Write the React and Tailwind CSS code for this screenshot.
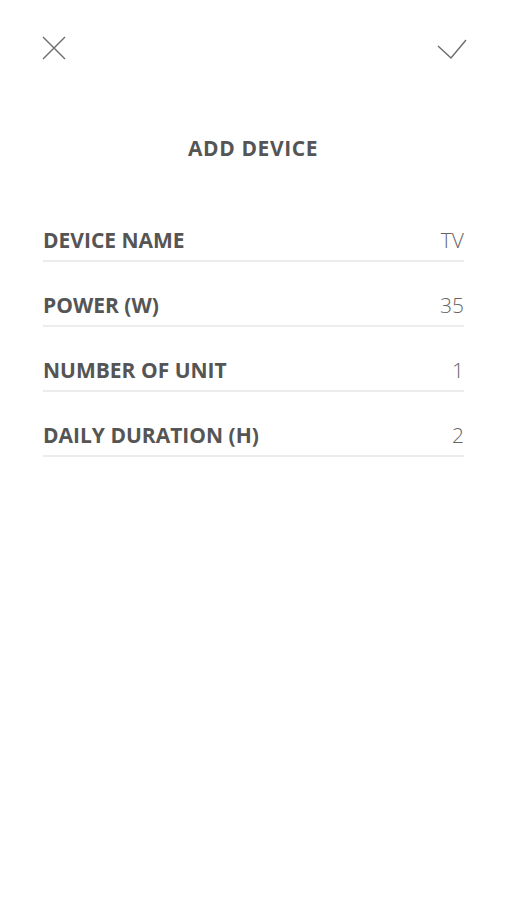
export default function App() {
  const rows = [
    ["DEVICE NAME", "TV"],
    ["POWER (W)", "35"],
    ["NUMBER OF UNIT", "1"],
    ["DAILY DURATION (H)", "2"],
  ];
  return (
    <div className="min-h-[900px] w-full bg-white" style={{ fontFamily: '"Open Sans", sans-serif' }}>
      <div className="flex justify-between pt-[36px] pl-[41px] pr-[39px]">
        <svg width="26" height="24" viewBox="0 0 26 24" fill="none" stroke="#6b6b6b" strokeWidth="1.4">
          <path d="M2 1 L24 23 M24 1 L2 23" />
        </svg>
        <svg width="30" height="24" viewBox="0 0 30 24" fill="none" stroke="#6b6b6b" strokeWidth="1.4">
          <path d="M1 10 L14 22 L29 4" />
        </svg>
      </div>
      <h1 className="mt-[76px] text-center text-[21px] leading-[24px] font-bold text-[#555555] tracking-[0.6px]">
        ADD DEVICE
      </h1>
      <div className="mt-[37px] pl-[43px] pr-[42px]">
        {rows.map(([label, value]) => (
          <div key={label} className="flex h-[65px] items-end justify-between border-b-2 border-[#ececec] pb-[10px]">
            <span className="text-[21px] leading-[20px] font-bold text-[#555555]">{label}</span>
            <span className="text-[21px] leading-[20px] font-light text-[#666666]">{value}</span>
          </div>
        ))}
      </div>
    </div>
  );
}
